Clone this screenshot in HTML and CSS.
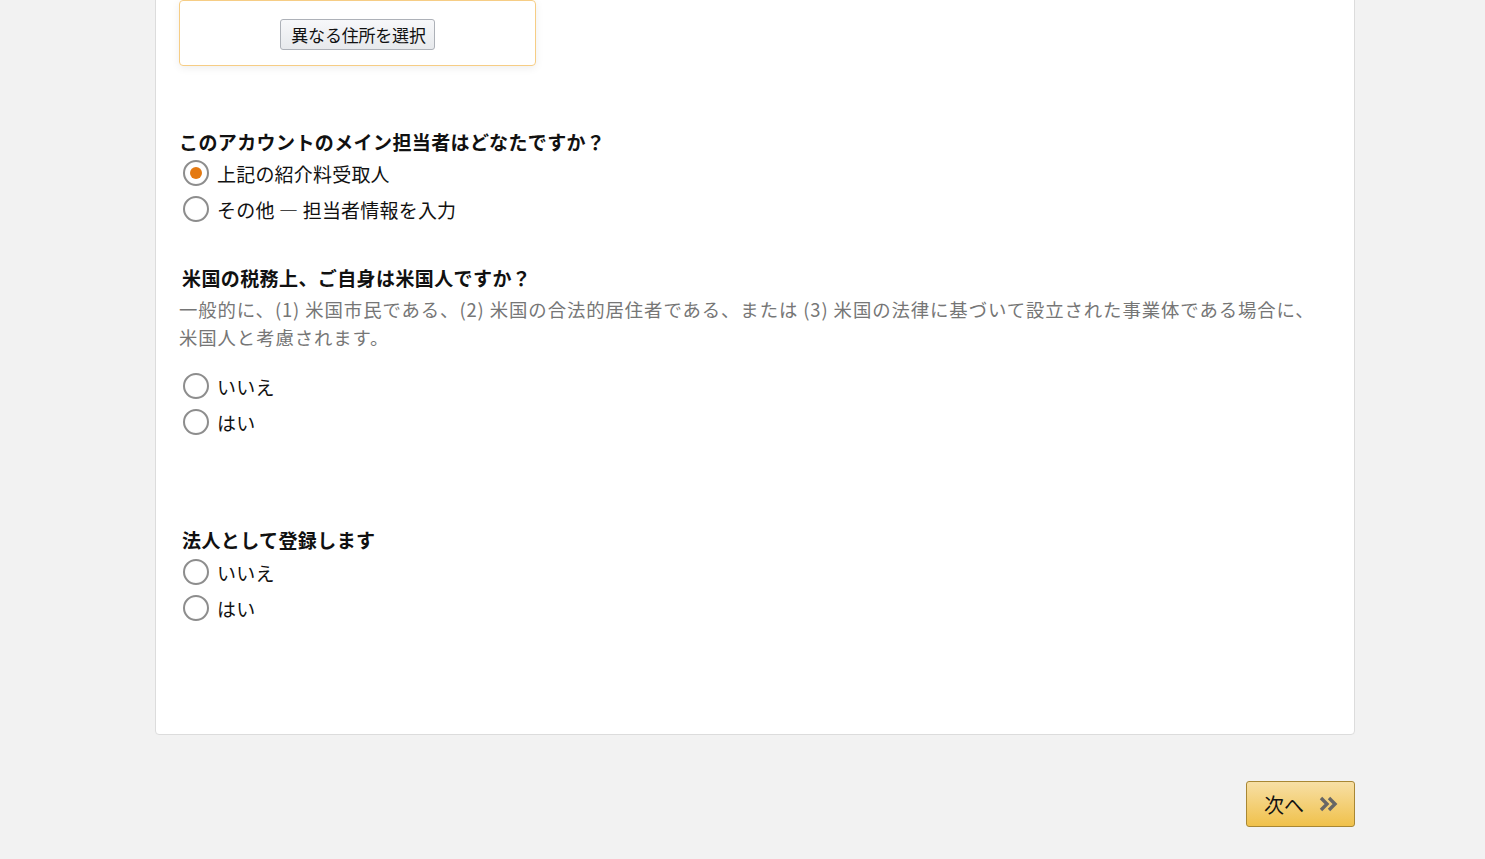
FILE: index.html
```html
<!DOCTYPE html>
<html lang="ja">
<head>
<meta charset="utf-8">
<title>登録</title>
<link rel="stylesheet" href="styles.css">
</head>
<body>
<div class="page">
  <div class="panel">
    <div class="address-card">
      <button class="btn-secondary" type="button">異なる住所を選択</button>
    </div>

    <fieldset class="question q1">
      <legend class="q-title">このアカウントのメイン担当者はどなたですか？</legend>
      <label class="option"><input type="radio" name="contact" checked><span>上記の紹介料受取人</span></label>
      <label class="option"><input type="radio" name="contact"><span>その他 — 担当者情報を入力</span></label>
    </fieldset>

    <fieldset class="question q2">
      <legend class="q-title indent">米国の税務上、ご自身は米国人ですか？</legend>
      <p class="q-desc">一般的に、(1) 米国市民である、(2) 米国の合法的居住者である、または (3) 米国の法律に基づいて設立された事業体である場合に、米国人と考慮されます。</p>
      <label class="option"><input type="radio" name="us"><span>いいえ</span></label>
      <label class="option"><input type="radio" name="us"><span>はい</span></label>
    </fieldset>

    <fieldset class="question q3">
      <legend class="q-title indent">法人として登録します</legend>
      <label class="option"><input type="radio" name="corp"><span>いいえ</span></label>
      <label class="option"><input type="radio" name="corp"><span>はい</span></label>
    </fieldset>
  </div>

  <div class="actions">
    <button class="btn-primary" type="button">
      <span>次へ</span>
      <svg class="chev" width="19" height="16" viewBox="0 0 19 16" aria-hidden="true">
        <path d="M2 2 L8 8 L2 14 M10 2 L16 8 L10 14" fill="none" stroke="#666" stroke-width="3.4" stroke-linecap="butt" stroke-linejoin="miter"/>
      </svg>
    </button>
  </div>
</div>
</body>
</html>
```

FILE: styles.css
```css
html, body {
  margin: 0;
  padding: 0;
  background: #f2f2f2;
  overflow: hidden;
}

body {
  font-family: "Noto Sans CJK JP", "Noto Sans", sans-serif;
  color: #111;
}

.page {
  width: 1200px;
  margin: -21px 0 0 155px;
}

.panel {
  background: #fff;
  border: 1px solid #dcdcdc;
  border-radius: 0 0 4px 4px;
  padding: 20px 24px 108px 23px;
}

.address-card {
  width: 355px;
  border: 1px solid #f6cd85;
  border-radius: 4px;
  box-shadow: 0 2px 8px rgba(0, 0, 0, 0.07);
  padding: 18px 0 15px;
  display: flex;
  justify-content: center;
}

.btn-secondary {
  font-family: inherit;
  font-size: 17px;
  line-height: 29px;
  height: 31px;
  padding: 0 8px 0 10px;
  color: #111;
  background: linear-gradient(#f7f8fa, #e7e9ec);
  border: 1px solid #adb1b8;
  border-radius: 3px;
  margin-left: 0;
  letter-spacing: -0.2px;
}

.question {
  border: 0;
  margin: 0;
  padding: 0;
  display: flex;
  flex-direction: column;
}

.q1 { margin-top: 64px; }
.q2 { margin-top: 39px; }
.q3 { margin-top: 88px; }

.q-title {
  padding: 0;
  font-size: 19px;
  line-height: 24px;
  font-weight: 700;
  color: #111;
  float: left;
  width: 100%;
  letter-spacing: 0.4px;
}

.q-title.indent { padding-left: 3px; }

.q-desc {
  margin: 5px 0 17px;
  max-width: 1140px;
  font-size: 18.4px;
  line-height: 28px;
  color: #767676;
  letter-spacing: 0.9px;
}

.option {
  display: flex;
  align-items: center;
  height: 36px;
  font-size: 19px;
  color: #111;
  cursor: pointer;
}

.option span { letter-spacing: 0.2px; }

.q1 .option:first-of-type { margin-top: 1px; }
.q3 .option:first-of-type { margin-top: 2px; }

.option input {
  appearance: none;
  -webkit-appearance: none;
  width: 26px;
  height: 26px;
  margin: 0 8px 0 4px;
  border: 2px solid #8d8d8d;
  border-radius: 50%;
  background: radial-gradient(circle, #fff 60%, #f3f3f3 100%);
  display: grid;
  place-items: center;
  flex: none;
}

.option input:checked::after {
  content: "";
  width: 12px;
  height: 12px;
  border-radius: 50%;
  background: #e47911;
}

.actions {
  display: flex;
  justify-content: flex-end;
  margin-top: 46px;
}

.btn-primary {
  display: flex;
  align-items: center;
  gap: 15px;
  height: 46px;
  padding: 0 16px 0 17px;
  font-family: inherit;
  font-size: 20px;
  color: #111;
  background: linear-gradient(#f7dfa5, #f0c14b);
  border: 1px solid #a88734;
  border-radius: 3px;
}

.chev { display: block; }
```
